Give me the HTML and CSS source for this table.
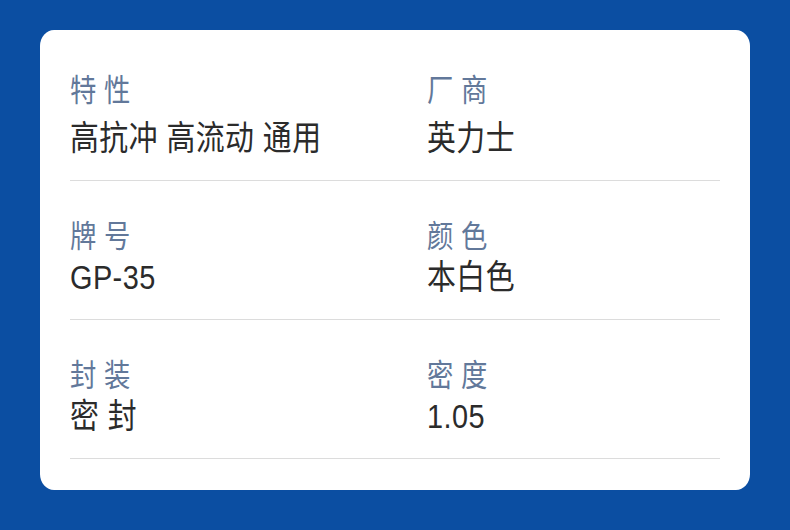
FILE: index.html
```html
<!DOCTYPE html>
<html lang="zh-CN">
<head>
<meta charset="utf-8">
<title>规格</title>
<link rel="stylesheet" href="styles.css">
</head>
<body>
<div class="card">
  <div class="row row-first">
    <div class="cell">
      <div class="label">特性</div>
      <div class="value">高抗冲 高流动 通用</div>
    </div>
    <div class="cell">
      <div class="label">厂商</div>
      <div class="value">英力士</div>
    </div>
  </div>
  <div class="row">
    <div class="cell">
      <div class="label">牌号</div>
      <div class="value">GP-35</div>
    </div>
    <div class="cell">
      <div class="label">颜色</div>
      <div class="value">本白色</div>
    </div>
  </div>
  <div class="row">
    <div class="cell">
      <div class="label">封装</div>
      <div class="value">密 封</div>
    </div>
    <div class="cell">
      <div class="label">密度</div>
      <div class="value">1.05</div>
    </div>
  </div>
</div>
</body>
</html>
```

FILE: styles.css
```css
html, body {
  margin: 0;
  padding: 0;
}
body {
  background: #0b4ea2;
  padding: 30px 40px 40px;
  font-family: "Liberation Sans", "Noto Sans CJK SC", sans-serif;
}
.card {
  width: 710px;
  height: 460px;
  box-sizing: border-box;
  background: #ffffff;
  border-radius: 14px / 16px;
  padding: 5px 30px 0;
}
.row {
  display: grid;
  grid-template-columns: 357px 1fr;
  padding: 38px 0 22px;
  border-bottom: 1px solid #dcdcdc;
}
.cell {
  display: flex;
  flex-direction: column;
  gap: 2px;
}
.row-first .cell {
  gap: 9px;
}
.label,
.value {
  transform: scaleX(0.85);
  transform-origin: left center;
  white-space: nowrap;
}
.label {
  font-size: 31px;
  line-height: 36px;
  letter-spacing: 9px;
  color: #62789a;
}
.value {
  font-size: 34px;
  line-height: 40px;
  letter-spacing: 0.5px;
  color: #2b2b2b;
}
```
